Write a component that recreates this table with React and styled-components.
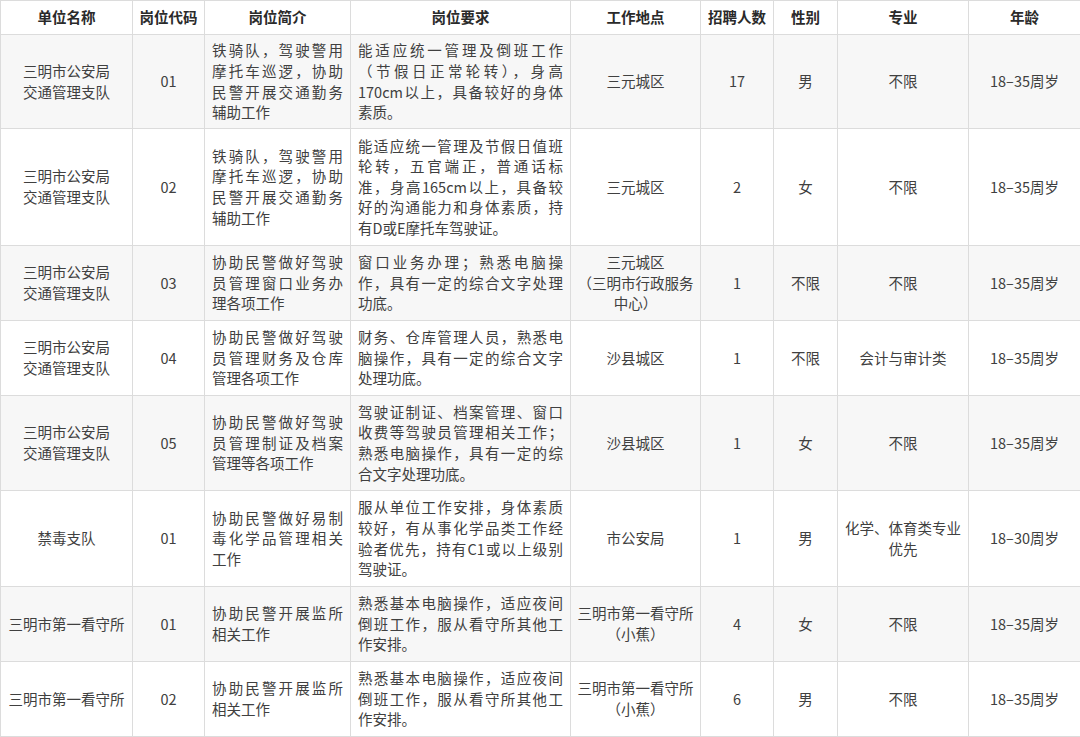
import React from "react";
import styled, { createGlobalStyle } from "styled-components";

const Global = createGlobalStyle`
  html, body { margin: 0; padding: 0; background: #fff; }
  body {
    font-family: "Noto Sans CJK SC", "Noto Sans", sans-serif;
    color: #404040;
  }
`;

const Table = styled.table`
  width: 1080px;
  table-layout: fixed;
  border-collapse: collapse;
  font-size: 14.5px;
  line-height: 20.6px;
`;

const HeadCell = styled.th`
  height: 33px;
  padding: 0 4px;
  border: 1px solid #dcdcdc;
  font-weight: 700;
  color: #2a2a2a;
  text-align: center;
  vertical-align: middle;
  white-space: nowrap;
  background: #fff;
`;

const Row = styled.tr`
  height: ${(p) => p.$h}px;
  background: ${(p) => (p.$shade ? "#f7f7f7" : "#ffffff")};
`;

const Cell = styled.td`
  border: 1px solid #dcdcdc;
  padding: 0 ${(p) => (p.$text ? 7 : 4)}px 0 ${(p) => (p.$text ? 7 : 4)}px;
  text-align: ${(p) => (p.$text ? "left" : "center")};
  vertical-align: middle;
`;

const Line = styled.span`
  display: block;
  white-space: nowrap;
`;

const JLine = styled.span`
  display: block;
  white-space: nowrap;
  text-align: ${(p) => (p.$last ? "left" : "justify")};
  text-align-last: ${(p) => (p.$last ? "left" : "justify")};
`;

const cols = [132, 72, 146, 220, 130, 73, 64, 131, 112];
const heads = ["单位名称", "岗位代码", "岗位简介", "岗位要求", "工作地点", "招聘人数", "性别", "专业", "年龄"];

const traffic = ["三明市公安局", "交通管理支队"];
const jail = ["三明市第一看守所"];
const jailIntro = ["协助民警开展监所", "相关工作"];
const jailReq = ["熟悉基本电脑操作，适应夜间", "倒班工作，服从看守所其他工", "作安排。"];
const jailLoc = ["三明市第一看守所", "（小蕉）"];

const rows = [
  {
    h: 94, unit: traffic, code: "01",
    intro: ["铁骑队，驾驶警用", "摩托车巡逻，协助", "民警开展交通勤务", "辅助工作"],
    req: ["能适应统一管理及倒班工作", "（节假日正常轮转），身高", "170cm以上，具备较好的身体", "素质。"],
    loc: ["三元城区"], num: "17", sex: "男", major: ["不限"], age: "18–35周岁",
  },
  {
    h: 117, unit: traffic, code: "02",
    intro: ["铁骑队，驾驶警用", "摩托车巡逻，协助", "民警开展交通勤务", "辅助工作"],
    req: ["能适应统一管理及节假日值班", "轮转，五官端正，普通话标", "准，身高165cm以上，具备较", "好的沟通能力和身体素质，持", "有D或E摩托车驾驶证。"],
    loc: ["三元城区"], num: "2", sex: "女", major: ["不限"], age: "18–35周岁",
  },
  {
    h: 75, unit: traffic, code: "03",
    intro: ["协助民警做好驾驶", "员管理窗口业务办", "理各项工作"],
    req: ["窗口业务办理；熟悉电脑操", "作，具有一定的综合文字处理", "功底。"],
    loc: ["三元城区", "（三明市行政服务", "中心）"], num: "1", sex: "不限", major: ["不限"], age: "18–35周岁",
  },
  {
    h: 75, unit: traffic, code: "04",
    intro: ["协助民警做好驾驶", "员管理财务及仓库", "管理各项工作"],
    req: ["财务、仓库管理人员，熟悉电", "脑操作，具有一定的综合文字", "处理功底。"],
    loc: ["沙县城区"], num: "1", sex: "不限", major: ["会计与审计类"], age: "18–35周岁",
  },
  {
    h: 95, unit: traffic, code: "05",
    intro: ["协助民警做好驾驶", "员管理制证及档案", "管理等各项工作"],
    req: ["驾驶证制证、档案管理、窗口", "收费等驾驶员管理相关工作；", "熟悉电脑操作，具有一定的综", "合文字处理功底。"],
    loc: ["沙县城区"], num: "1", sex: "女", major: ["不限"], age: "18–35周岁",
  },
  {
    h: 96, unit: ["禁毒支队"], code: "01",
    intro: ["协助民警做好易制", "毒化学品管理相关", "工作"],
    req: ["服从单位工作安排，身体素质", "较好，有从事化学品类工作经", "验者优先，持有C1或以上级别", "驾驶证。"],
    loc: ["市公安局"], num: "1", sex: "男", major: ["化学、体育类专业", "优先"], age: "18–30周岁",
  },
  {
    h: 75, unit: jail, code: "01", intro: jailIntro, req: jailReq,
    loc: jailLoc, num: "4", sex: "女", major: ["不限"], age: "18–35周岁",
  },
  {
    h: 75, unit: jail, code: "02", intro: jailIntro, req: jailReq,
    loc: jailLoc, num: "6", sex: "男", major: ["不限"], age: "18–35周岁",
  },
];

const Lines = ({ items }) => items.map((t, i) => <Line key={i}>{t}</Line>);
const Justified = ({ items }) =>
  items.map((t, i) => (
    <JLine key={i} $last={i === items.length - 1}>
      {t}
    </JLine>
  ));

export default function App() {
  return (
    <>
      <Global />
      <Table lang="zh-CN">
        <colgroup>
          {cols.map((w, i) => (
            <col key={i} style={{ width: w }} />
          ))}
        </colgroup>
        <thead>
          <tr>
            {heads.map((h) => (
              <HeadCell key={h}>{h}</HeadCell>
            ))}
          </tr>
        </thead>
        <tbody>
          {rows.map((r, i) => (
            <Row key={i} $h={r.h} $shade={i % 2 === 0}>
              <Cell><Lines items={r.unit} /></Cell>
              <Cell>{r.code}</Cell>
              <Cell $text><Justified items={r.intro} /></Cell>
              <Cell $text><Justified items={r.req} /></Cell>
              <Cell><Lines items={r.loc} /></Cell>
              <Cell>{r.num}</Cell>
              <Cell>{r.sex}</Cell>
              <Cell><Lines items={r.major} /></Cell>
              <Cell>{r.age}</Cell>
            </Row>
          ))}
        </tbody>
      </Table>
    </>
  );
}
